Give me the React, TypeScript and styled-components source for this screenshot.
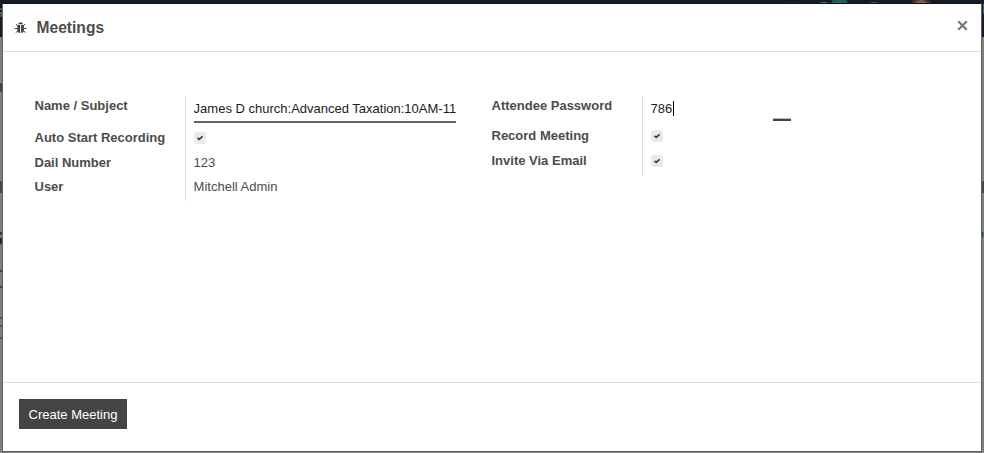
import React from "react";
import styled, { createGlobalStyle } from "styled-components";

const Global = createGlobalStyle`
  * { box-sizing: border-box; }
  body { margin: 0; overflow: hidden; font-family: "Liberation Sans", Arial, sans-serif; font-size: 13px; color: #4c4c4c; }
`;

const Page = styled.div`
  position: relative;
  width: 984px;
  height: 453px;
  overflow: hidden;
  background: #7f7f7f;
`;

const Backdrop = styled.svg`
  display: block;
`;

const Dialog = styled.section`
  position: absolute;
  left: 2px;
  top: 3px;
  width: 980px;
  height: 449px;
  display: flex;
  flex-direction: column;
  background: #fff;
  border: 1px solid #626262;
  border-top-color: #0e151e;
`;

const Header = styled.header`
  display: flex;
  align-items: center;
  height: 48px;
  padding: 0 13px 0 11px;
  border-bottom: 1px solid #dedede;
`;

const Title = styled.h4`
  flex: 1;
  margin: 0 0 0 9.5px;
  font-size: 15.6px;
  line-height: 24px;
`;

const CloseButton = styled.button`
  display: flex;
  padding: 0;
  margin-top: -5px;
  border: 0;
  background: none;
`;

const Body = styled.main`
  flex: 1;
  display: flex;
  padding: 44px 31px 0 31.5px;
`;

const Group = styled.div<{ $width: number; $height: number }>`
  display: grid;
  grid-template-columns: 151.5px 1fr;
  width: ${(p) => p.$width}px;
  height: ${(p) => p.$height}px;
`;

const Labels = styled.div`
  display: flex;
  flex-direction: column;
  padding-top: 1px;
  border-right: 1px solid #ddd;
`;

const Values = styled.div`
  display: flex;
  flex-direction: column;
  padding-left: 7.6px;
`;

const Cell = styled.div<{ $height: number }>`
  display: flex;
  align-items: center;
  flex: none;
  height: ${(p) => p.$height}px;
  white-space: nowrap;
`;

const Label = styled.div<{ $gap?: number }>`
  height: 18px;
  margin-bottom: ${(p) => p.$gap ?? 0}px;
  line-height: 18px;
  font-weight: bold;
  white-space: nowrap;
`;

const TextField = styled.div`
  width: 262.5px;
  height: 27px;
  margin-bottom: 3px;
  line-height: 25px;
  color: #1c1c1c;
  overflow: hidden;
  white-space: nowrap;
  border-bottom: 2px solid #666;
`;

const PasswordField = styled.div`
  display: flex;
  align-items: center;
  height: 27px;
  width: 140px;
  position: relative;
  line-height: 25px;
  color: #1c1c1c;
  padding-bottom: 2px;
`;

const Caret = styled.span`
  width: 1px;
  height: 15px;
  margin-left: 0.4px;
  background: #000;
`;

const FocusMark = styled.span`
  position: absolute;
  right: 0;
  bottom: 2px;
  width: 18px;
  height: 3px;
  border-top: 1px solid #b8b8b8;
  background: #444;
`;

const Check = styled.span<{ $cool?: boolean }>`
  display: flex;
  align-items: center;
  justify-content: center;
  width: 12px;
  height: 12px;
  border-radius: 3px;
  background: ${(p) => (p.$cool ? "#e6eaee" : "#eaeaea")};
`;

const Footer = styled.footer`
  height: 69px;
  padding: 16px;
  border-top: 1px solid #dedee6;
`;

const PrimaryButton = styled.button`
  display: block;
  width: 108px;
  height: 30px;
  padding: 0;
  border: 0;
  background: #444;
  color: #fff;
  font: 13px "Liberation Sans", Arial, sans-serif;
`;

const Checkbox = ({ cool }: { cool?: boolean }) => (
  <Check $cool={cool}>
    <svg width="12" height="12" viewBox="0 0 12 12" fill="none" stroke="#3c3c3c" strokeWidth="1.7">
      <path d="M3.500 5.900 5.200 7.300 8.600 4.300" />
    </svg>
  </Check>
);

const BugIcon = () => (
  <svg width="13" height="12" viewBox="0 0 13 12" fill="none" stroke="#404040">
    <path d="M4.300 2.300a2.300 2 0 0 1 4.600 0z" fill="#404040" stroke="none" />
    <path d="M3.300 3.100h2.800v8C4.300 11 3.300 9.800 3.300 8zM7.100 3.100h2.800V8c0 1.800-1 3-2.800 3.100z" fill="#404040" stroke="none" />
    <path d="M1.900 1.900 4 4M11.300 1.900 9.200 4M.7 6.500h3M9.500 6.500h3M3.900 8.500 2 10.700M9.300 8.500l1.900 2.200" />
  </svg>
);

export default function App() {
  return (
    <>
      <Global />
      <Page>
        <Backdrop width="984" height="453" aria-hidden="true">
          <rect width="984" height="37" fill="#141c26" />
          <ellipse cx="792" cy="4" rx="2" ry="1.500" fill="#6c7177" />
          <ellipse cx="824" cy="4" rx="4.500" ry="2" fill="#6c7177" />
          <circle cx="839.500" cy="6" r="9" fill="#1d6056" />
          <path d="M837 4l2.500-1 2.500 1" stroke="#77918e" fill="none" />
          <ellipse cx="874" cy="4" rx="4.500" ry="2" fill="#50565d" />
          <circle cx="921" cy="8" r="11" fill="#4b3026" />
          <ellipse cx="921" cy="4" rx="6" ry="4" fill="#765c54" />
          <path d="M983 4h1v10h-1z" fill="#356482" />
          <path d="M0 146.500H984M0 338.500H984" stroke="#6b6b6b" />
          <path d="M0 181h984v12H0z" fill="#474747" />
          <path d="M0 271h3M0 287h3" stroke="#454047" strokeWidth="2" />
          <path d="M0 318h3M0 326h3M0 338h3" stroke="#5b4656" strokeWidth="2" />
          <g fontFamily="Liberation Sans" fill="#292929">
            <text x="-5" y="17" fontSize="16" fill="#68727b">s</text>
            <text x="-6" y="92" fontSize="16">n</text>
            <text x="-10" y="245" fontSize="20" fontWeight="bold">S</text>
            <text x="976.500" y="238" fontSize="13">p</text>
          </g>
        </Backdrop>
        <Dialog role="dialog">
          <Header>
            <BugIcon />
            <Title>Meetings</Title>
            <CloseButton aria-label="Close">
              <svg width="11" height="11" viewBox="0 0 11 11" stroke="#7c7c7c" strokeWidth="2.300">
                <path d="M1.200 1.200 9.800 9.800M9.800 1.200 1.200 9.800" />
              </svg>
            </CloseButton>
          </Header>
          <Body>
            <Group $width={457} $height={105}>
              <Labels>
                <Label $gap={14}>Name / Subject</Label>
                <Label $gap={7}>Auto Start Recording</Label>
                <Label $gap={6}>Dail Number</Label>
                <Label>User</Label>
              </Labels>
              <Values>
                <TextField>James D church:Advanced Taxation:10AM-11</TextField>
                <Cell $height={24}><Checkbox /></Cell>
                <Cell $height={25}>123</Cell>
                <Cell $height={22}>Mitchell Admin</Cell>
              </Values>
            </Group>
            <Group $width={440} $height={80}>
              <Labels>
                <Label $gap={12}>Attendee Password</Label>
                <Label $gap={7}>Record Meeting</Label>
                <Label>Invite Via Email</Label>
              </Labels>
              <Values>
                <PasswordField>786<Caret /><FocusMark /></PasswordField>
                <Cell $height={26}><Checkbox /></Cell>
                <Cell $height={24}><Checkbox cool /></Cell>
              </Values>
            </Group>
          </Body>
          <Footer>
            <PrimaryButton>Create Meeting</PrimaryButton>
          </Footer>
        </Dialog>
      </Page>
    </>
  );
}
